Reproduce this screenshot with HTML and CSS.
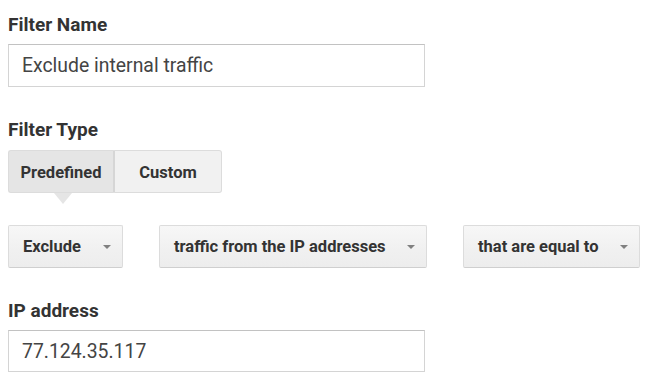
FILE: index.html
```html
<!DOCTYPE html>
<html lang="en">
<head>
  <meta charset="UTF-8">
  <title>Add Filter</title>
  <link rel="stylesheet" href="styles.css">
</head>
<body>
  <div class="field">
    <div class="label">Filter Name</div>
    <div class="text-input name-input">Exclude internal traffic</div>
  </div>

  <div class="field">
    <div class="label">Filter Type</div>
    <div class="toggle">
      <div class="toggle-btn active">Predefined</div>
      <div class="toggle-btn">Custom</div>
    </div>
  </div>

  <div class="field selects">
    <div class="select sel-action">Exclude <span class="caret"></span></div>
    <div class="select sel-source">traffic from the IP addresses <span class="caret"></span></div>
    <div class="select sel-match">that are equal to <span class="caret"></span></div>
  </div>

  <div class="field">
    <div class="label">IP address</div>
    <div class="text-input ip-input">77.124.35.117</div>
  </div>
</body>
</html>
```

FILE: styles.css
```css
body {
  margin: 0;
  padding: 14px 8px 0 8px;
  font-family: Roboto, "Liberation Sans", Arial, sans-serif;
  background: #fff;
  color: #333;
}
.field {
  margin-bottom: 32px;
}
.label {
  font-size: 19px;
  line-height: 22px;
  font-weight: bold;
  color: #333;
  margin-bottom: 8px;
}
.text-input {
  box-sizing: border-box;
  width: 417px;
  height: 43px;
  border: 1px solid #d4d4d4;
  border-top-color: #c2c2c2;
  padding: 0 13px;
  display: flex;
  align-items: center;
  font-size: 19.4px;
  color: #444;
}
.ip-input {
  height: 42px;
}
.toggle {
  display: flex;
  position: relative;
  margin-top: 9px;
}
.toggle-btn {
  box-sizing: border-box;
  width: 107px;
  height: 43px;
  display: flex;
  align-items: center;
  justify-content: center;
  padding-top: 2px;
  font-size: 16.5px;
  font-weight: bold;
  color: #333;
  background: #f1f1f1;
  border: 1px solid #dcdcdc;
  border-left: none;
  border-radius: 0 3px 3px 0;
}
.toggle-btn.active {
  background: #e5e5e5;
  border-left: 1px solid #dcdcdc;
  border-right: 2px solid #d6d6d6;
  border-radius: 3px 0 0 3px;
  position: relative;
}
.toggle-btn.active::after {
  content: "";
  position: absolute;
  left: 45px;
  top: 42px;
  border-left: 9px solid transparent;
  border-right: 9px solid transparent;
  border-top: 11px solid #e5e5e5;
}
.selects {
  display: flex;
  gap: 36px;
  margin-bottom: 32px;
}
.select {
  box-sizing: border-box;
  height: 43px;
  display: flex;
  align-items: center;
  padding: 0 11px 0 14px;
  font-size: 16.5px;
  font-weight: bold;
  color: #333;
  background: linear-gradient(#f7f7f7, #f0f0f0 60%, #ededed);
  border: 1px solid #dcdcdc;
  border-bottom-color: #cfcfcf;
  border-radius: 2px;
}
.sel-action { width: 115px; }
.sel-source { width: 268px; }
.sel-match { width: 177px; }
.caret {
  margin-left: auto;
  width: 0;
  height: 0;
  border-left: 4.5px solid transparent;
  border-right: 4.5px solid transparent;
  border-top: 4.5px solid #808080;
}
```
